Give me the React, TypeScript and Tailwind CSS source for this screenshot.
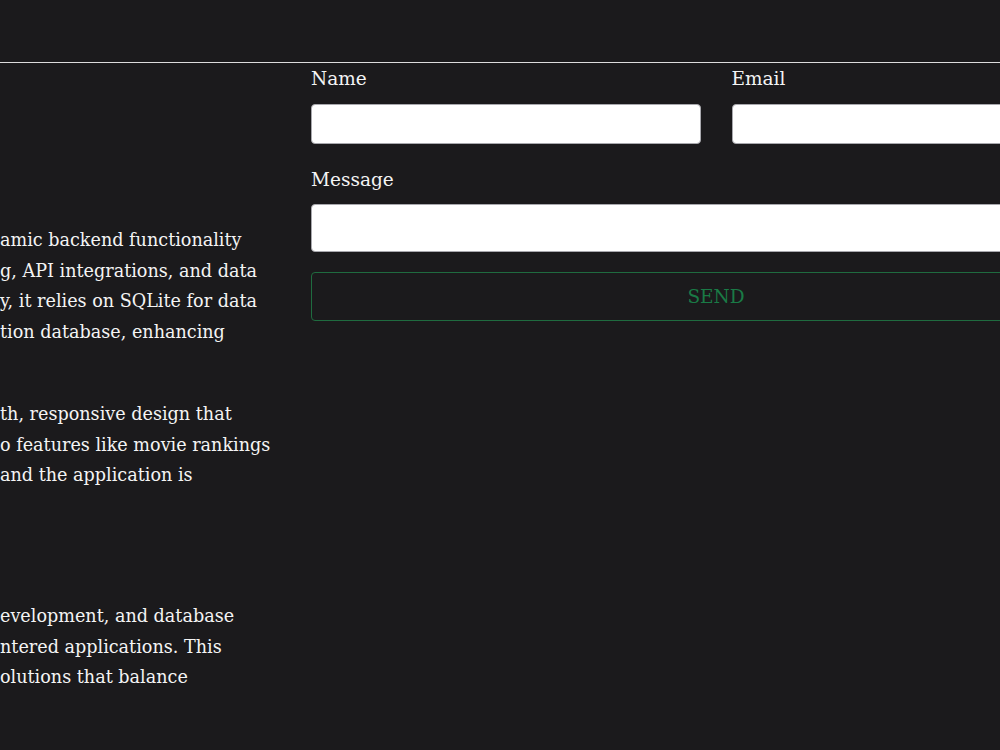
import React from "react";

const serif = { fontFamily: '"DejaVu Serif", "Liberation Serif", serif' };

type Line = [string, string];

const p1: Line[] = [
  ["This project uses Django for dyn", "amic backend functionality"],
  ["including user authentication, routin", "g, API integrations, and data"],
  ["management. For simplicity and portabilit", "y, it relies on SQLite for data"],
  ["storage instead of a separate produc", "tion database, enhancing"],
];
const p2: Line[] = [
  ["The frontend offers a clean, smoo", "th, responsive design that"],
  ["gives users easy access t", "o features like movie rankings"],
  ["reviews and watchlists,", " and the application is"],
];
const p3: Line[] = [
  ["My skills span frontend, backend d", "evelopment, and database"],
  ["design, focused on building user-ce", "ntered applications. This"],
  ["allows me to create s", "olutions that balance"],
];

function Para({ lines, className }: { lines: Line[]; className?: string }) {
  return (
    <p className={className}>
      {lines.map(([pre, rest], i) => (
        <span key={i} className="flex whitespace-nowrap">
          <span className="flex w-[200px] shrink-0 justify-end overflow-hidden">{pre}</span>
          <span>{rest}</span>
        </span>
      ))}
    </p>
  );
}

export default function App() {
  return (
    <div
      className="h-[750px] w-[1000px] overflow-hidden bg-[#1b1a1c] text-[#f4f4f4]"
      style={serif}
    >
      <header className="h-[63px] border-b border-[#dcdcdc]" />
      <main className="flex text-[17.6px] leading-[30.7px]">
        <section className="w-[311px] shrink-0">
          <div className="-ml-[200px]">
            <Para lines={p1} className="mt-[162px]" />
            <Para lines={p2} className="mt-[51px]" />
            <Para lines={p3} className="mt-[110px]" />
          </div>
        </section>
        <form className="w-[810px] shrink-0 pt-[1px]">
          <div className="grid grid-cols-2 gap-x-[31px]">
            <label className="flex flex-col">
              <span className="text-[18.5px]">Name</span>
              <input type="text" className="mt-[9px] h-[40px] rounded-[4px] border border-[#a8a8ad] bg-white" />
            </label>
            <label className="flex flex-col">
              <span className="text-[18.5px]">Email</span>
              <input type="email" className="mt-[9px] h-[40px] rounded-[4px] border border-[#a8a8ad] bg-white" />
            </label>
          </div>
          <label className="mt-[21px] flex flex-col">
            <span className="text-[18.5px]">Message</span>
            <textarea className="mt-[9px] h-[48px] resize-none rounded-[4px] border border-[#a8a8ad] bg-white" />
          </label>
          <button
            type="button"
            className="mt-[20px] flex h-[49px] w-full items-center justify-center rounded-[4px] border border-[#1f6b3f] text-[18.5px] text-[#1a7a46]"
          >
            SEND
          </button>
        </form>
      </main>
    </div>
  );
}
